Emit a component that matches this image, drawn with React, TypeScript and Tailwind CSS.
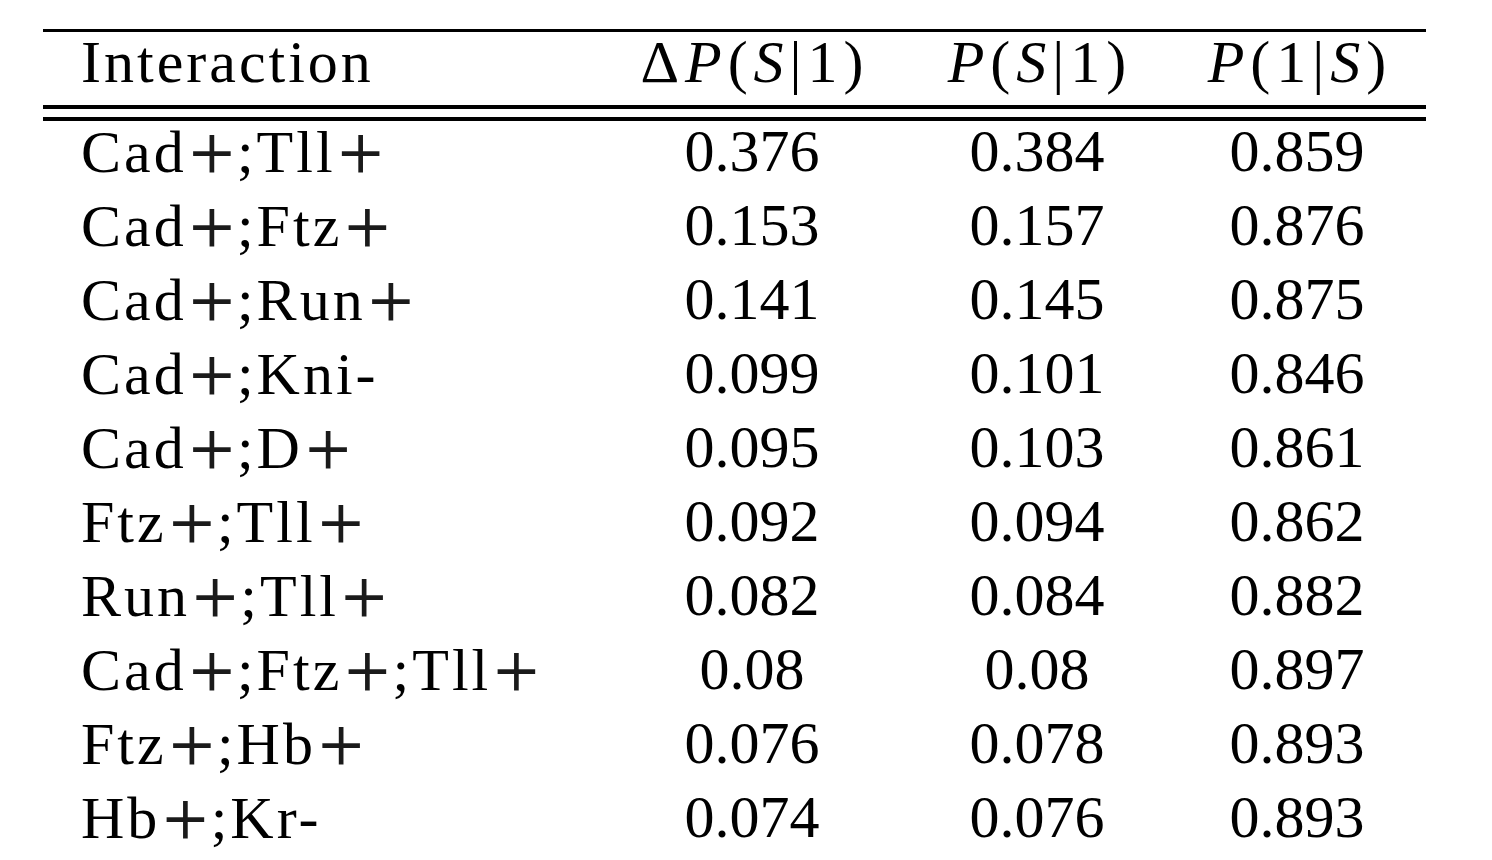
import React from "react"

const rows: [string, string, string, string][] = [
  ["Cad+;Tll+", "0.376", "0.384", "0.859"],
  ["Cad+;Ftz+", "0.153", "0.157", "0.876"],
  ["Cad+;Run+", "0.141", "0.145", "0.875"],
  ["Cad+;Kni-", "0.099", "0.101", "0.846"],
  ["Cad+;D+", "0.095", "0.103", "0.861"],
  ["Ftz+;Tll+", "0.092", "0.094", "0.862"],
  ["Run+;Tll+", "0.082", "0.084", "0.882"],
  ["Cad+;Ftz+;Tll+", "0.08", "0.08", "0.897"],
  ["Ftz+;Hb+", "0.076", "0.078", "0.893"],
  ["Hb+;Kr-", "0.074", "0.076", "0.893"],
]

// the "+" comes from DejaVu Serif, whose plus is as wide as Computer Modern's
function Label({ text }: { text: string }) {
  const parts = text.split(/(\+)/)
  return (
    <span className="tracking-[3px]">
      {parts.map((p, i) =>
        p === "+" ? (
          <span key={i} className="font-['DejaVu_Serif'] tracking-normal text-[#1a1a1a]">
            +
          </span>
        ) : (
          <span key={i}>{p}</span>
        ),
      )}
    </span>
  )
}

const cols = "grid grid-cols-[555px_308px_262px_258px]"

export default function App() {
  return (
    <div
      className="h-[860px] w-full overflow-hidden bg-white pt-[29px] pl-[43px] text-black"
      style={{ fontFamily: '"Liberation Serif", "Times New Roman", serif' }}
    >
      <div className="flex w-[1383px] flex-col text-[60px] leading-[60px]">
        <div className="h-[3px] bg-black" />
        <div className={`${cols} h-[73px]`}>
          <div className="pl-[38px] tracking-[3px]">Interaction</div>
          <div className="pl-[6px] text-center tracking-[6px]">
            Δ<i>P</i>(<i>S</i>|1)
          </div>
          <div className="pl-[6px] text-center tracking-[6px]">
            <i>P</i>(<i>S</i>|1)
          </div>
          <div className="pl-[6px] text-center tracking-[6px]">
            <i>P</i>(1|<i>S</i>)
          </div>
        </div>
        <div className="h-[4px] bg-black" />
        <div className="h-[8px]" />
        <div className="h-[4px] bg-black" />
        {rows.map((r) => (
          <div key={r[0]} className={`${cols} h-[74px]`}>
            <div className="pl-[38px]">
              <Label text={r[0]} />
            </div>
            <div className="text-center">{r[1]}</div>
            <div className="text-center">{r[2]}</div>
            <div className="text-center">{r[3]}</div>
          </div>
        ))}
      </div>
    </div>
  )
}
